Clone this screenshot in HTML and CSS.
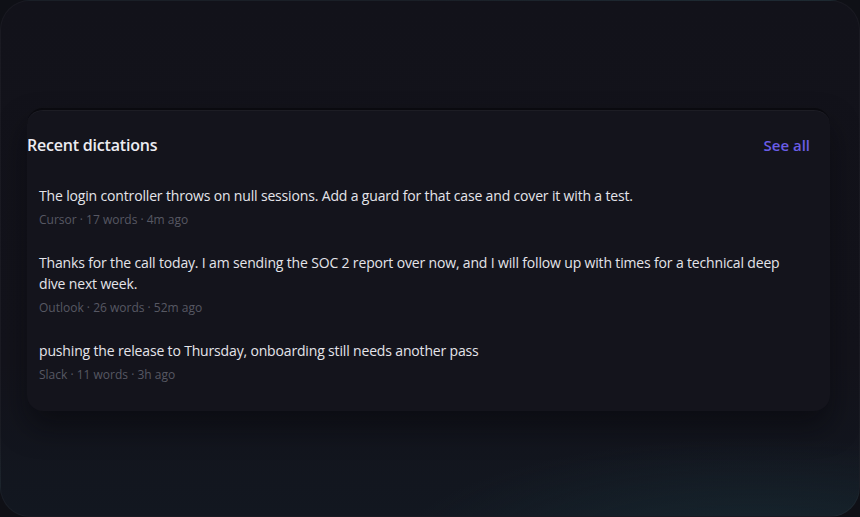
FILE: index.html
```html
<!DOCTYPE html>
<html lang="en">
<head>
<meta charset="utf-8">
<title>Recent dictations</title>
<link rel="stylesheet" href="styles.css">
</head>
<body>
<div class="window">
  <section class="card">
    <header class="card-head">
      <h2 class="title">Recent dictations</h2>
      <a class="see-all" href="#">See all</a>
    </header>
    <ul class="list">
      <li class="item">
        <p class="text">The login controller throws on null sessions. Add a guard for that case and cover it with a test.</p>
        <p class="meta">Cursor · 17 words · 4m ago</p>
      </li>
      <li class="item">
        <p class="text">Thanks for the call today. I am sending the SOC 2 report over now, and I will follow up with times for a technical deep dive next week.</p>
        <p class="meta">Outlook · 26 words · 52m ago</p>
      </li>
      <li class="item">
        <p class="text">pushing the release to Thursday, onboarding still needs another pass</p>
        <p class="meta">Slack · 11 words · 3h ago</p>
      </li>
    </ul>
  </section>
</div>
</body>
</html>
```
FILE: styles.css
```css
* { box-sizing: border-box; }
html, body { margin: 0; height: 100%; }
body {
  background: #0f1016;
  font-family: "Open Sans", "Noto Sans", sans-serif;
  overflow: hidden;
}
.window {
  height: 517px;
  border-radius: 30px;
  border: 1px solid rgba(255,255,255,0.035);
  background:
    radial-gradient(ellipse 520px 170px at 88% 108%, rgba(30,62,70,0.45), rgba(30,62,70,0) 70%),
    linear-gradient(180deg, #12121a 0%, #13131b 70%, #121720 100%);
  padding: 107px 29px 0 26px;
}
.card {
  border-radius: 16px;
  border-top: 2px solid #0a0a0f;
  background: #14141c;
  box-shadow: 0 16px 28px rgba(5,6,10,0.5), inset 0 1px 0 rgba(255,255,255,0.04);
  padding: 24px 0 26px 0;
  height: 303px;
}
.card-head {
  display: flex;
  justify-content: space-between;
  align-items: center;
  padding-right: 20px;
}
.title {
  margin: 0;
  font-size: 16px;
  font-weight: 600;
  color: #ececf2;
  letter-spacing: -0.2px;
}
.see-all {
  font-size: 15px;
  font-weight: 600;
  color: #6a5de6;
  text-decoration: none;
}
.list {
  list-style: none;
  margin: 29px 0 0;
  padding: 0 40px 0 12px;
}
.item { margin-bottom: 24px; }
.text {
  margin: 0;
  font-size: 14px;
  line-height: 21px;
  letter-spacing: -0.16px;
  color: #e4e4ea;
}
.meta {
  margin: 6px 0 0;
  font-size: 12px;
  line-height: 16px;
  color: #575863;
}
```
